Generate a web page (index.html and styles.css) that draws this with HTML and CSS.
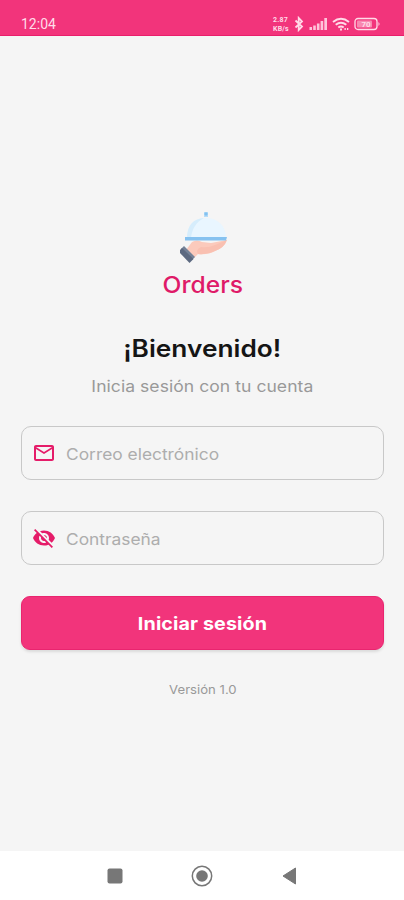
FILE: index.html
```html
<!DOCTYPE html>
<html lang="es">
<head>
<meta charset="utf-8">
<title>Orders</title>
<link rel="stylesheet" href="styles.css">
</head>
<body>
<header class="status">
  <span class="clock">12:04</span>
  <div class="indicators">
    <div class="speed"><div>2.87</div><div>KB/s</div></div>
    <svg class="bluetooth" width="10" height="16" viewBox="0 0 10 16"><path d="M1.500 4.500l6.500 6-3.300 3.500V2L8 5.500l-6.500 6"/></svg>
    <svg class="signal" width="19" height="12" viewBox="0 0 19 12"><path d="M.5 9H3v3H.5zM4.200 7.500h2.600V12H4.200zM7.900 5.500h2.600V12H7.900zM11.600 3h2.600v9h-2.600zM15.300 0h2.700v12h-2.700z"/></svg>
    <svg class="wifi" width="18" height="14" viewBox="0 0 18 14"><path d="M1 5q8-6.500 16 0M3.700 7.800q5.300-4.300 10.600 0M6.300 10.500q2.700-2.200 5.400 0"/><path d="M8 12.500h2M12.500 12h1.300M15 12h1.300"/></svg>
    <svg class="battery" width="27" height="14" viewBox="0 0 27 14"><rect class="shell" x="1" y="1.500" width="22" height="11" rx="3"/><rect class="level" x="3" y="3.500" width="15" height="7" rx="1"/><path d="M24.500 5q2 2 0 4z"/><text x="12" y="10">70</text></svg>
  </div>
</header>
<main class="login">
  <svg class="logo" width="54" height="56" viewBox="0 0 54 56">
    <path d="M11 28C11 14 19 8 30 8s20 7 20 20z" fill="#e9f6ff"/>
    <path d="M11 28C11 15 18 8.500 28 8c-8 4-12 11-13 20z" fill="#d6edfc"/>
    <path d="M28 2h4v5h-4z" fill="#b5dcf8"/><circle cx="30" cy="4" r="1.700" fill="#83c1f0"/>
    <path d="M16 32q5-3 10 0l9 1 16-3q-3 8-12 11-7 4-17 3l-4 4-8-8z" fill="#fbcabc"/>
    <path d="M25 37q7 1 14-2l12-5q-3 8-12 11-8 4-17 3-3-4 3-7z" fill="#f9c0b1"/>
    <path d="M9 27h42l-1 3.500H9z" fill="#86c2f0"/>
    <path d="M8 36l11 11-3 3L5 39z" fill="#748297"/>
    <path d="M6 38l11.500 11-4 4L4 43v-3z" fill="#5c6980"/>
  </svg>
  <div class="brand">Orders</div>
  <h1 class="title">¡Bienvenido!</h1>
  <p class="subtitle">Inicia sesión con tu cuenta</p>
  <div class="field">
    <svg class="icon" width="24" height="24" viewBox="0 0 24 24"><path d="M22 6c0-1.100-.9-2-2-2H4c-1.100 0-2 .9-2 2v12c0 1.100.9 2 2 2h16c1.100 0 2-.9 2-2V6zm-2 0-8 5-8-5h16zm0 12H4V8l8 5 8-5v10z"/></svg>
    <span class="hint">Correo electrónico</span>
  </div>
  <div class="field">
    <svg class="icon" width="24" height="24" viewBox="0 0 24 24"><path d="M12 7c2.760 0 5 2.240 5 5 0 .65-.13 1.260-.36 1.830l2.920 2.920c1.510-1.260 2.700-2.890 3.430-4.750-1.730-4.390-6-7.500-11-7.500-1.400 0-2.740.25-3.980.7l2.160 2.160C10.740 7.130 11.350 7 12 7zM2 4.270l2.280 2.280.46.46C3.080 8.300 1.780 10.020 1 12c1.730 4.390 6 7.500 11 7.500 1.550 0 3.030-.3 4.380-.84l.42.42L19.730 22 21 20.730 3.270 3 2 4.270zM7.530 9.800l1.550 1.550c-.05.21-.08.43-.08.65 0 1.660 1.340 3 3 3 .22 0 .44-.03.65-.08l1.550 1.550c-.67.33-1.410.53-2.200.53-2.760 0-5-2.240-5-5 0-.79.2-1.530.53-2.200zm4.310-.78 3.150 3.150.02-.16c0-1.660-1.340-3-3-3l-.17.01z"/></svg>
    <span class="hint">Contraseña</span>
  </div>
  <button class="submit"><span class="label">Iniciar sesión</span></button>
  <div class="version">Versión 1.0</div>
</main>
<nav class="navbar">
  <svg width="22" height="22" viewBox="0 0 22 22"><rect x="3.500" y="3.500" width="15" height="15" rx="2" fill="#777"/></svg>
  <svg width="22" height="22" viewBox="0 0 22 22"><circle cx="11" cy="11" r="9.700" fill="none" stroke="#777" stroke-width="1.500"/><circle cx="11" cy="11" r="5.800" fill="#777"/></svg>
  <svg width="22" height="22" viewBox="0 0 22 22"><path d="M5 11L17.500 3v16z" fill="#777" stroke="#777" stroke-linejoin="round"/></svg>
</nav>
</body>
</html>
```
FILE: styles.css
```css
* { box-sizing: border-box; }
body {
  margin: 0;
  width: 404px;
  height: 900px;
  display: flex;
  flex-direction: column;
  overflow: hidden;
  background: #f5f5f5;
  font-family: Inter, "Open Sans", sans-serif;
}
.status {
  height: 36px;
  flex: none;
  display: flex;
  align-items: flex-start;
  justify-content: space-between;
  padding: 16px 23px 0 21px;
  background: #f2347b;
  border-bottom: 1px solid #e91e6b;
  color: #ffdbe8;
}
.clock { font: 400 14px/16px Roboto, sans-serif; }
.indicators { display: flex; align-items: center; height: 16px; }
.speed {
  display: flex;
  flex-direction: column;
  gap: 1px;
  width: 18px;
  font: 700 7px/8px Roboto, sans-serif;
  letter-spacing: .2px;
}
.bluetooth { margin-left: 3px; fill: none; stroke: #ffdbe8; stroke-width: 1.800; }
.signal { margin-left: 5px; fill: #ffc3da; }
.wifi { margin-left: 4px; fill: none; stroke: #ffdbe8; stroke-width: 1.900; }
.battery { margin-left: 4px; fill: #ffdbe8; }
.battery .shell { fill: none; stroke: #ffdbe8; stroke-width: 1.300; }
.battery .level { fill: #f889b1; }
.battery text { font: 700 8px Roboto, sans-serif; text-anchor: middle; }
.login {
  flex: 1;
  display: flex;
  flex-direction: column;
  align-items: center;
  padding: 174px 20px 0 21px;
}
.logo { display: block; }
.brand, .title, .subtitle, .label, .version { transform: scaleX(1.095); }
.brand {
  margin-top: 4px;
  color: #df1a68;
  font-size: 22.500px;
  font-weight: 500;
  line-height: 30px;
}
.title {
  margin: 33px 0 0;
  color: #151515;
  font-size: 24px;
  font-weight: 600;
  line-height: 32px;
}
.subtitle {
  margin: 10px 0 0;
  color: #999;
  font-size: 16px;
  line-height: 22px;
  letter-spacing: .05px;
}
.field {
  width: 363px;
  height: 54px;
  flex: none;
  display: flex;
  align-items: center;
  margin-top: 29px;
  padding-left: 10px;
  border: 1.500px solid #c8c8c8;
  border-radius: 10px;
}
.field + .field { margin-top: 31px; }
.icon { fill: #e51c69; }
.hint {
  margin-left: 10px;
  padding-top: 1px;
  color: #adadad;
  font-size: 16px;
  line-height: 22px;
  transform: scaleX(1.085);
  transform-origin: left;
}
.submit {
  width: 363px;
  height: 54px;
  flex: none;
  margin-top: 31px;
  padding: 0;
  border: 1px solid #e9256f;
  border-radius: 9px;
  background: #f2347b;
  box-shadow: 0 2px 3px #0000001c;
  color: #fff;
  font: 700 18px/24px Inter, sans-serif;
}
.label { display: block; padding-top: 2px; letter-spacing: .1px; }
.version {
  margin-top: 32px;
  color: #999;
  font-size: 12px;
  line-height: 16px;
}
.navbar {
  height: 49px;
  flex: none;
  display: flex;
  align-items: center;
  gap: 65px;
  padding: 1px 0 0 104px;
  background: #fff;
}
```
